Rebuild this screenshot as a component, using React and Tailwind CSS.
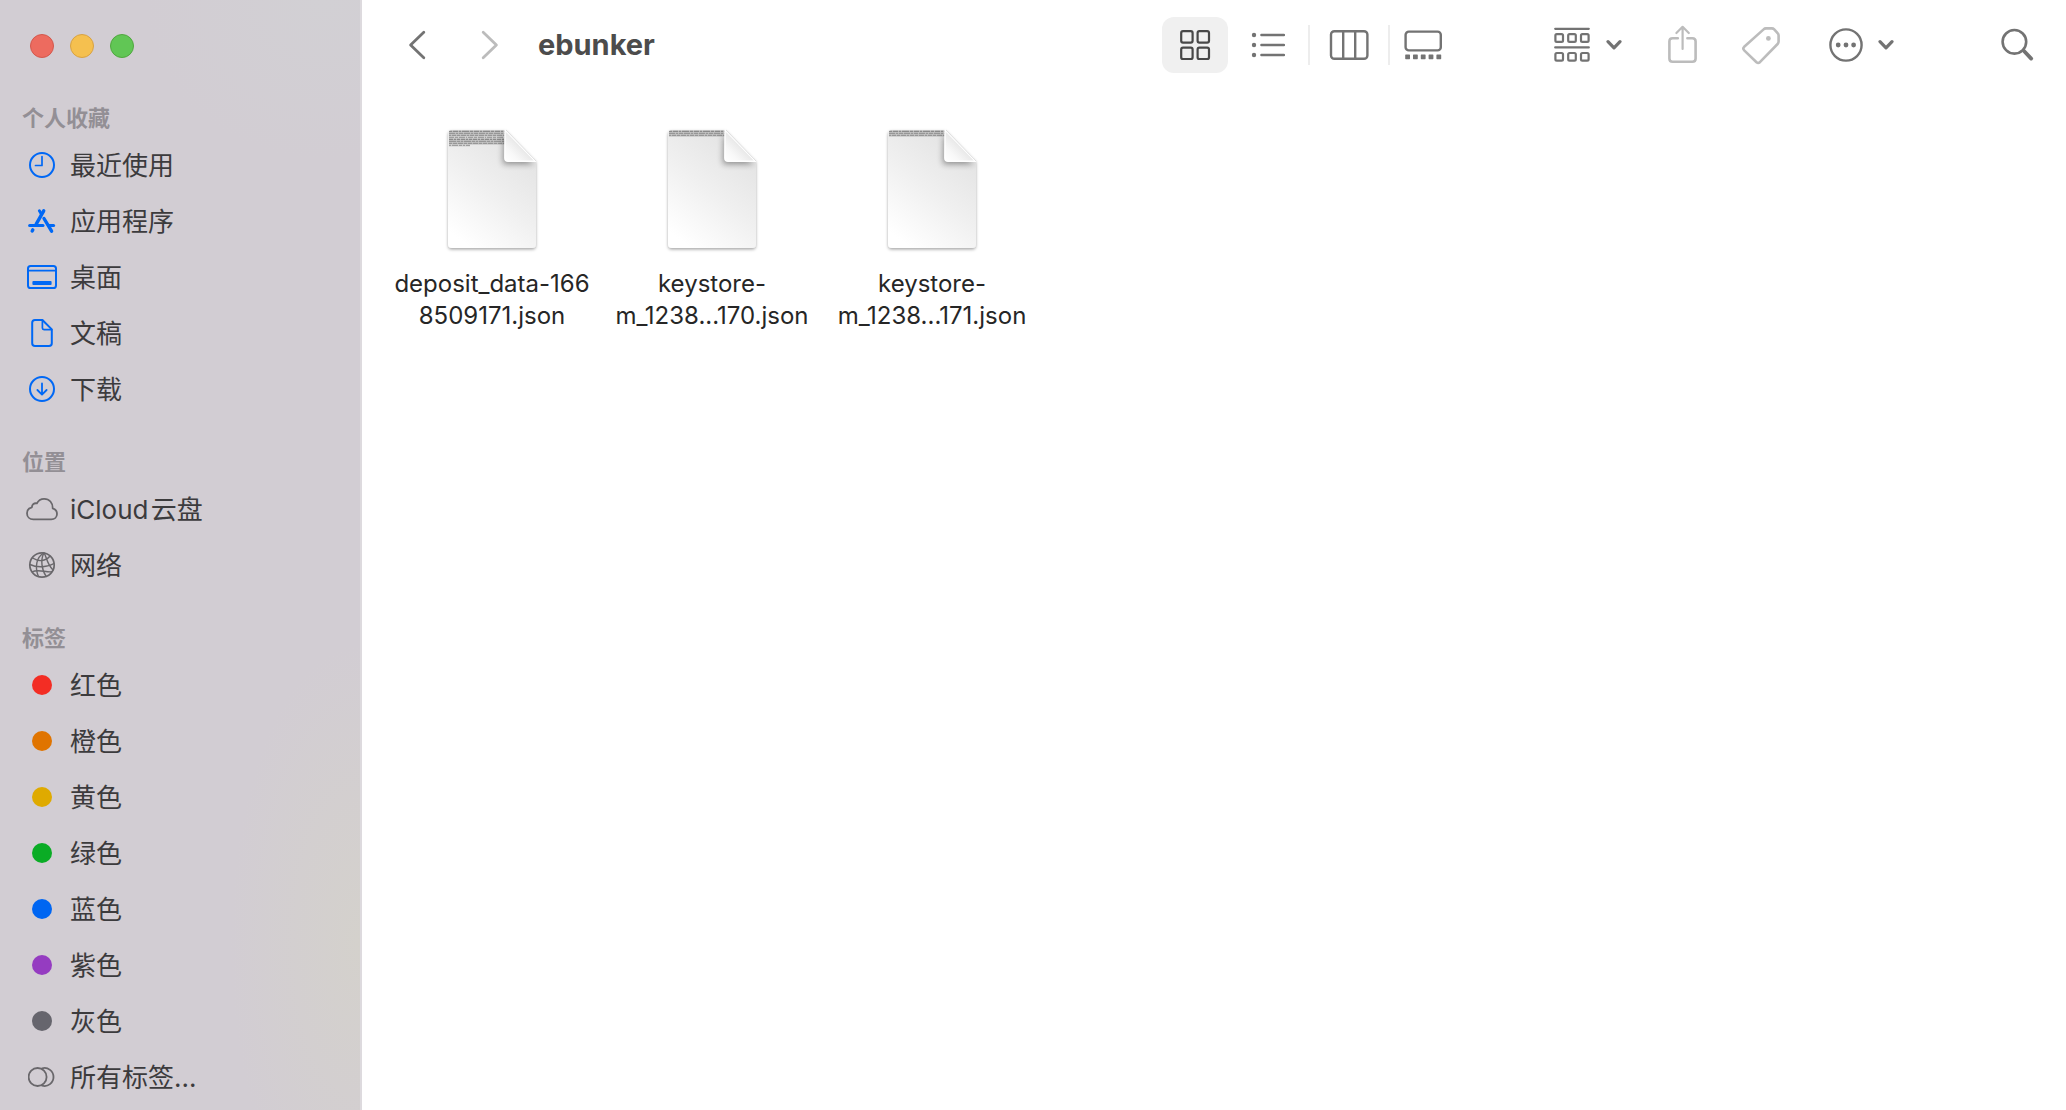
import React from "react";

const line = { fill: "none", stroke: "currentColor", strokeLinecap: "round", strokeLinejoin: "round" };

function ClockIcon() {
  return (
    <svg width="28" height="28" viewBox="0 0 28 28" {...line} strokeWidth="2">
      <circle cx="14" cy="14" r="12" />
      <path d="M14 5.5V14.5H7.5" strokeWidth="1.7" />
    </svg>
  );
}

function AppsIcon() {
  return (
    <svg width="28" height="28" viewBox="0 0 28 28" {...line} strokeWidth="3.4">
      <path d="M11.4 3.8L13.2 6.8" strokeWidth="3" />
      <path d="M15.7 3.8L8.2 17.2" />
      <path d="M16 11.5L23.6 24.2" />
      <path d="M1.6 18.6H15" strokeWidth="3" />
      <path d="M21.2 18.6H25.6" strokeWidth="3" />
      <path d="M4.8 22.9L4.2 24" />
    </svg>
  );
}

function DesktopIcon() {
  return (
    <svg width="32" height="26" viewBox="0 0 32 26" {...line} strokeWidth="2">
      <rect x="2" y="2" width="28" height="22" rx="2.6" />
      <path d="M2 6.6H30" strokeWidth="1.7" />
      <rect x="6.4" y="17" width="19.2" height="4" rx="1" fill="currentColor" stroke="none" />
    </svg>
  );
}

function DocumentIcon() {
  return (
    <svg width="24" height="30" viewBox="0 0 24 30" {...line} strokeWidth="2">
      <path d="M12.4 2H5Q2.2 2 2.2 4.8V25.2Q2.2 28 5 28H19Q21.8 28 21.8 25.2V11.4Z" />
      <path d="M12.4 2V10Q12.4 11.6 14 11.6H21.6" strokeWidth="1.7" />
    </svg>
  );
}

function DownloadIcon() {
  return (
    <svg width="28" height="28" viewBox="0 0 28 28" {...line} strokeWidth="2">
      <circle cx="14" cy="14" r="12" />
      <path d="M14 8.4V19.4M9.4 15L14 19.6L18.6 15" strokeWidth="1.8" />
    </svg>
  );
}

function CloudIcon() {
  return (
    <svg width="34" height="26" viewBox="0 0 34 26" {...line} strokeWidth="1.8">
      <path d="M8.4 23.4H26.2C29.6 23.4 32 21 32 18C32 15.2 30.3 13.2 27.7 12.4C27.9 6.8 24.3 2.8 19.2 2.8C15.8 2.8 13.2 4.6 11.9 7.4C9.2 6.7 6.9 8.5 6.9 11.3C3.9 12 2 14.3 2 17.2C2 20.8 4.7 23.4 8.4 23.4Z" />
    </svg>
  );
}

function NetworkIcon() {
  return (
    <svg width="28" height="28" viewBox="0 0 28 28" {...line} strokeWidth="1.4">
      <circle cx="14" cy="14" r="12.2" strokeWidth="1.7" />
      <path d="M15.8 2C8.5 6 6.5 16 10.4 25.6" />
      <path d="M15.8 2C12.5 9 13.5 19 18.2 25.4" />
      <path d="M15.8 2C18.5 4 18 12 25 19" />
      <path d="M4.5 7C10.5 10.8 17.5 10.6 22 5" />
      <path d="M2 13.5C9 17 20 16.2 26 12.5" />
      <path d="M4.2 20.8C10 17.8 18 21.5 23.5 20.8" />
    </svg>
  );
}

function AllTagsIcon() {
  return (
    <svg width="28" height="24" viewBox="0 0 28 24" {...line} strokeWidth="1.8">
      <circle cx="9.6" cy="12" r="9" />
      <path d="M14.2 3.3A9 9 0 1 1 14.2 20.7" />
    </svg>
  );
}

function Dot({ className }) {
  return <span className={"block size-5 rounded-full " + className} />;
}

const sections = [
  {
    title: "个人收藏",
    items: [
      { label: "最近使用", icon: <ClockIcon /> },
      { label: "应用程序", icon: <AppsIcon /> },
      { label: "桌面", icon: <DesktopIcon /> },
      { label: "文稿", icon: <DocumentIcon /> },
      { label: "下载", icon: <DownloadIcon /> },
    ],
    tone: "text-[#0068f5]",
  },
  {
    title: "位置",
    items: [
      { label: "iCloud\u200a云盘", icon: <CloudIcon /> },
      { label: "网络", icon: <NetworkIcon /> },
    ],
    tone: "text-[#69676b]",
  },
  {
    title: "标签",
    items: [
      { label: "红色", icon: <Dot className="bg-[#f32d24]" /> },
      { label: "橙色", icon: <Dot className="bg-[#e07400]" /> },
      { label: "黄色", icon: <Dot className="bg-[#dfaa00]" /> },
      { label: "绿色", icon: <Dot className="bg-[#0aac25]" /> },
      { label: "蓝色", icon: <Dot className="bg-[#0066f2]" /> },
      { label: "紫色", icon: <Dot className="bg-[#953cc1]" /> },
      { label: "灰色", icon: <Dot className="bg-[#66656d]" /> },
      { label: "所有标签...", icon: <AllTagsIcon /> },
    ],
    tone: "text-[#69676b]",
  },
];

function Sidebar() {
  return (
    <aside className="w-[362px] shrink-0 border-r-2 border-[#dddade] bg-[#d2cdd3] bg-[radial-gradient(ellipse_130px_300px_at_100%_85%,#d4d1cc,transparent),radial-gradient(ellipse_180px_160px_at_90%_0%,#d2d0d4,transparent)]">
      <div className="flex h-[92px] items-center gap-4 pl-[30px]">
        <button aria-label="关闭" className="size-6 rounded-full border border-[#d3584d] bg-[#ed6b5f]" />
        <button aria-label="最小化" className="size-6 rounded-full border border-[#d8a243] bg-[#f5c04f]" />
        <button aria-label="缩放" className="size-6 rounded-full border border-[#50a73f] bg-[#61c655]" />
      </div>
      <nav className="flex flex-col gap-[26px] pt-[7px]">
        {sections.map((s) => (
          <section key={s.title}>
            <h2 className="flex h-[38px] items-center pl-[22px] text-[22px] font-bold text-[#938f95]">{s.title}</h2>
            <ul>
              {s.items.map((it) => (
                <li key={it.label}>
                  <a href="#" className="flex h-14 items-center text-[26px] text-[#3c3b3d]">
                    <span className={"ml-[22px] mr-2 flex w-10 justify-center " + s.tone}>{it.icon}</span>
                    <span>{it.label}</span>
                  </a>
                </li>
              ))}
            </ul>
          </section>
        ))}
      </nav>
    </aside>
  );
}

function Chevron() {
  return (
    <svg width="16" height="12" viewBox="0 0 16 12" {...line} strokeWidth="3.2">
      <path d="M2 2.6L8 8.8L14 2.6" />
    </svg>
  );
}

function Toolbar() {
  return (
    <header className="flex h-[90px] items-center pl-[46px] pr-[32px] text-[#737373]">
      <button aria-label="后退" className="flex">
        <svg width="18" height="30" viewBox="0 0 18 30" {...line} strokeWidth="2.8">
          <path d="M15.8 2.2L2.6 15L15.8 27.8" />
        </svg>
      </button>
      <button aria-label="前进" disabled className="ml-[55px] flex text-[#bcbcbc]">
        <svg width="18" height="30" viewBox="0 0 18 30" {...line} strokeWidth="2.8">
          <path d="M2.2 2.2L15.4 15L2.2 27.8" />
        </svg>
      </button>
      <h1 className="ml-[39px] text-[29px] leading-9 font-bold text-[#4c4c4c]">ebunker</h1>

      <div className="ml-auto flex items-center">
        <button aria-label="图标视图" aria-pressed="true" className="flex h-14 w-[66px] items-center justify-center rounded-xl bg-[#f0f0f0] text-[#484848]">
          <svg width="32" height="32" viewBox="0 0 32 32" {...line} strokeWidth="2.2">
            <rect x="2.2" y="2.2" width="11.4" height="11.4" rx="1.8" />
            <rect x="18.6" y="2.2" width="11.4" height="11.4" rx="1.8" />
            <rect x="2.2" y="18.6" width="11.4" height="11.4" rx="1.8" />
            <rect x="18.6" y="18.6" width="11.4" height="11.4" rx="1.8" />
          </svg>
        </button>
        <button aria-label="列表视图" className="flex h-14 w-20 items-center justify-center">
          <svg width="34" height="26" viewBox="0 0 34 26" {...line} strokeWidth="2.4">
            <path d="M10.4 3H33M10.4 13H33M10.4 23H33" />
            <g fill="currentColor" stroke="none">
              <circle cx="3" cy="3" r="2.2" />
              <circle cx="3" cy="13" r="2.2" />
              <circle cx="3" cy="23" r="2.2" />
            </g>
          </svg>
        </button>
        <span className="h-10 w-[2px] bg-[#ededed]" />
        <button aria-label="分栏视图" className="flex h-14 w-[78px] items-center justify-center">
          <svg width="40" height="32" viewBox="0 0 40 32" {...line} strokeWidth="2.4">
            <rect x="2" y="2.2" width="36.4" height="27.6" rx="3.4" />
            <path d="M14.2 2.2V29.8M26.2 2.2V29.8" />
          </svg>
        </button>
        <span className="h-10 w-[2px] bg-[#ededed]" />
        <button aria-label="画廊视图" className="flex h-14 w-[66px] items-center justify-center">
          <svg width="38" height="30" viewBox="0 0 38 30" {...line} strokeWidth="2.4">
            <rect x="1.6" y="1.6" width="35.2" height="18.8" rx="3.2" />
            <g fill="currentColor" stroke="none">
              <rect x="1.2" y="24.4" width="4.8" height="4.8" rx="0.6" />
              <rect x="9" y="24.4" width="4.8" height="4.8" rx="0.6" />
              <rect x="16.8" y="24.4" width="4.8" height="4.8" rx="0.6" />
              <rect x="24.6" y="24.4" width="4.8" height="4.8" rx="0.6" />
              <rect x="32.4" y="24.4" width="4.8" height="4.8" rx="0.6" />
            </g>
          </svg>
        </button>
      </div>

      <button aria-label="分组" className="ml-[98px] flex items-center gap-4">
        <svg width="36" height="36" viewBox="0 0 36 36" {...line} strokeWidth="2.2">
          <path d="M1.2 1.8H34.8M1.2 20.4H34.8" />
          <rect x="1.4" y="7.2" width="7.6" height="7.6" rx="1.4" />
          <rect x="14.2" y="7.2" width="7.6" height="7.6" rx="1.4" />
          <rect x="27" y="7.2" width="7.6" height="7.6" rx="1.4" />
          <rect x="1.4" y="26" width="7.6" height="7.6" rx="1.4" />
          <rect x="14.2" y="26" width="7.6" height="7.6" rx="1.4" />
          <rect x="27" y="26" width="7.6" height="7.6" rx="1.4" />
        </svg>
        <Chevron />
      </button>
      <button aria-label="共享" disabled className="ml-[45px] flex text-[#bcbcbc]">
        <svg width="32" height="40" viewBox="0 0 32 40" {...line} strokeWidth="2.6">
          <path d="M10.8 13.2H5.6Q2.4 13.2 2.4 16.4V33.6Q2.4 36.8 5.6 36.8H25.4Q28.6 36.8 28.6 33.6V16.4Q28.6 13.2 25.4 13.2H20.4" />
          <path d="M15.6 24V2.2M9.4 8L15.6 1.8L21.8 8" strokeWidth="2.2" />
        </svg>
      </button>
      <button aria-label="标签" disabled className="ml-[42px] flex text-[#bcbcbc]">
        <svg width="40" height="40" viewBox="0 0 40 40" {...line} strokeWidth="2.6">
          <path d="M22.6 4.4Q23.6 3.4 25 3.4H30.8Q32.2 3.4 33.2 4.4L36.6 8.2Q37.6 9.2 37.6 10.6V16.6Q37.6 18 36.6 19L18.9 37.2Q17.2 38.6 15.5 37.2L3.2 25.4Q1.4 23.6 3.2 21.8Z" />
          <circle cx="27.4" cy="13.4" r="2.4" fill="currentColor" stroke="none" />
        </svg>
      </button>
      <button aria-label="更多" className="ml-[47px] flex items-center gap-[14px]">
        <svg width="36" height="36" viewBox="0 0 36 36" {...line} strokeWidth="2.4">
          <circle cx="18" cy="18" r="15.6" />
          <g fill="currentColor" stroke="none">
            <circle cx="10.2" cy="18" r="2.4" />
            <circle cx="18" cy="18" r="2.4" />
            <circle cx="25.6" cy="18" r="2.4" />
          </g>
        </svg>
        <Chevron />
      </button>
      <button aria-label="搜索" className="ml-[106px] flex">
        <svg width="34" height="34" viewBox="0 0 34 34" {...line} strokeWidth="2.6">
          <circle cx="14.4" cy="13.8" r="11.8" />
          <path d="M24 23L31.2 30.6" strokeWidth="3.8" />
        </svg>
      </button>
    </header>
  );
}

const dashes = [
  "3 1 5 1 2 1 7 1",
  "6 1 2 1 4 1",
  "2 1 4 1 3 1 5 1",
  "5 1 3 1 6 1 1 1",
  "4 1 2 1 3 1",
  "7 1 3 1 2 1",
  "3 1 4 1 5 1",
  "2 1 6 1 3 1",
];

function FileIcon({ id, rows }) {
  const body = "M8 2H62L92 33V116Q92 120 88 120H8Q4 120 4 116V6Q4 2 8 2Z";
  const last = rows - 1;
  return (
    <svg width="96" height="128" viewBox="0 0 96 128" aria-hidden="true">
      <defs>
        <linearGradient id={id + "p"} x1="0.8" y1="0.1" x2="0.25" y2="1">
          <stop offset="0" stopColor="#e3e3e3" />
          <stop offset="0.5" stopColor="#f0f0f0" />
          <stop offset="1" stopColor="#ffffff" />
        </linearGradient>
        <linearGradient id={id + "f"} x1="0.6" y1="0.4" x2="0" y2="1">
          <stop offset="0" stopColor="#e2e2e2" />
          <stop offset="0.6" stopColor="#f8f8f8" />
          <stop offset="1" stopColor="#ffffff" />
        </linearGradient>
        <clipPath id={id + "c"}>
          <path d={body} />
        </clipPath>
        <filter id={id + "s"} x="-20%" y="-20%" width="140%" height="140%">
          <feDropShadow dx="0" dy="1.5" stdDeviation="1.5" floodOpacity="0.35" />
        </filter>
        <filter id={id + "b"} x="-50%" y="-50%" width="200%" height="200%">
          <feGaussianBlur stdDeviation="3" />
        </filter>
      </defs>
      <path d={body} fill={"url(#" + id + "p)"} filter={"url(#" + id + "s)"} />
      <g clipPath={"url(#" + id + "c)"}>
        {dashes.slice(0, rows).map((d, i) => {
          const y = 3.4 + i * 2;
          const end = rows > 4 && i === last ? 26 : 62;
          return (
            <g key={i}>
              <path d={"M5 " + y + "H" + end} stroke={i % 4 === 3 ? "#cfcfcf" : "#bababa"} strokeWidth="2" />
              <path d={"M5 " + y + "H" + end} stroke="#808080" strokeWidth="1.2" strokeDasharray={d} opacity={i % 4 === 0 ? 0.8 : 0.6} />
            </g>
          );
        })}
        <path d="M60 6L59 36H90Z" fill="#000" opacity="0.4" filter={"url(#" + id + "b)"} />
        <path d="M61.5 1V30Q61.5 33.2 64.5 33.2H94V1Z" fill="#fff" />
      </g>
      <path d="M61 2L91.5 33.2H64Q60.8 33.2 60.8 30Z" fill={"url(#" + id + "f)"} stroke="#fff" strokeWidth="1.4" strokeLinejoin="round" />
      <path d="M62 2L92 33" stroke="#d8d8d8" strokeWidth="0.8" />
    </svg>
  );
}

const files = [
  { id: "deposit", lines: ["deposit_data-166", "8509171.json"], rows: 8 },
  { id: "key170", lines: ["keystore-", "m_1238...170.json"], rows: 3 },
  { id: "key171", lines: ["keystore-", "m_1238...171.json"], rows: 3 },
];

export default function App() {
  return (
    <div className="flex min-h-screen bg-white font-['Inter','Noto_Sans_CJK_SC',sans-serif]">
      <Sidebar />
      <main className="min-w-0 flex-1">
        <Toolbar />
        <ul className="flex flex-wrap pl-5 pt-[38px]">
          {files.map((f) => (
            <li key={f.id} className="w-[220px]">
              <button className="flex w-full flex-col items-center gap-3">
                <FileIcon id={f.id} rows={f.rows} />
                <span className="text-2xl leading-8 text-[#262626]">
                  {f.lines[0]}
                  <br />
                  {f.lines[1]}
                </span>
              </button>
            </li>
          ))}
        </ul>
      </main>
    </div>
  );
}
